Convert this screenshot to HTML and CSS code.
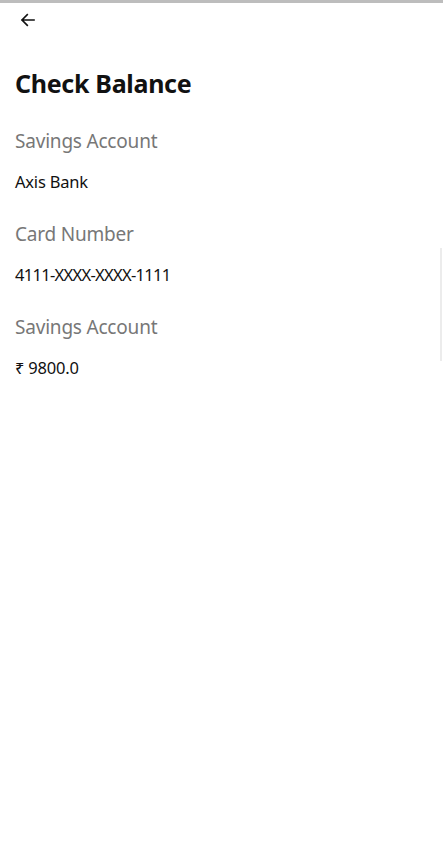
FILE: index.html
```html
<!DOCTYPE html>
<html lang="en">
<head>
    <meta charset="UTF-8">
    <meta name="viewport" content="width=device-width, initial-scale=1.0">
    <title>Check Balance</title>
    <link rel="stylesheet" href="styles.css">
</head>
<body>
<div class="topbar"></div>
<div class="screen">
    <div class="toolbar">
        <button class="back" aria-label="Back">
            <svg width="18" height="18" viewBox="0 0 24 24">
                <path d="M20 12H4M11 5l-7 7 7 7" fill="none" stroke="#111" stroke-width="2.2" stroke-linecap="square"/>
            </svg>
        </button>
    </div>
    <h1 class="title">Check Balance</h1>
    <div class="field">
        <div class="label">Savings Account</div>
        <div class="value">Axis Bank</div>
    </div>
    <div class="field">
        <div class="label">Card Number</div>
        <div class="value digits">4111-XXXX-XXXX-1111</div>
    </div>
    <div class="field">
        <div class="label">Savings Account</div>
        <div class="value">₹ 9800.0</div>
    </div>
    <div class="scroll-indicator"></div>
</div>
</body>
</html>
```

FILE: styles.css
```css
body {
    margin: 0;
    padding: 0;
    background-color: #fff;
    font-family: "Noto Sans", "Open Sans", sans-serif;
    color: #111;
}
.topbar {
    height: 3px;
    background-color: #bdbdbd;
}
.screen {
    position: relative;
    height: 864px;
    padding: 0 15px;
}
.toolbar {
    height: 33px;
    display: flex;
    align-items: center;
}
.back {
    border: none;
    background: none;
    padding: 0;
    margin-left: 4px;
    display: flex;
    cursor: pointer;
}
.title {
    margin: 32px 0 30px;
    font-size: 25px;
    font-weight: 700;
    line-height: 30px;
    letter-spacing: -0.3px;
}
.field {
    margin-bottom: 28px;
}
.label {
    font-size: 19px;
    line-height: 26px;
    color: #777;
    letter-spacing: -0.2px;
}
.value {
    margin-top: 17px;
    font-size: 16.5px;
    line-height: 22px;
    color: #111;
    letter-spacing: -0.2px;
}
.digits {
    letter-spacing: -0.7px;
}
.scroll-indicator {
    position: absolute;
    right: 1px;
    top: 245px;
    width: 2px;
    height: 113px;
    background-color: #ececec;
}
```
